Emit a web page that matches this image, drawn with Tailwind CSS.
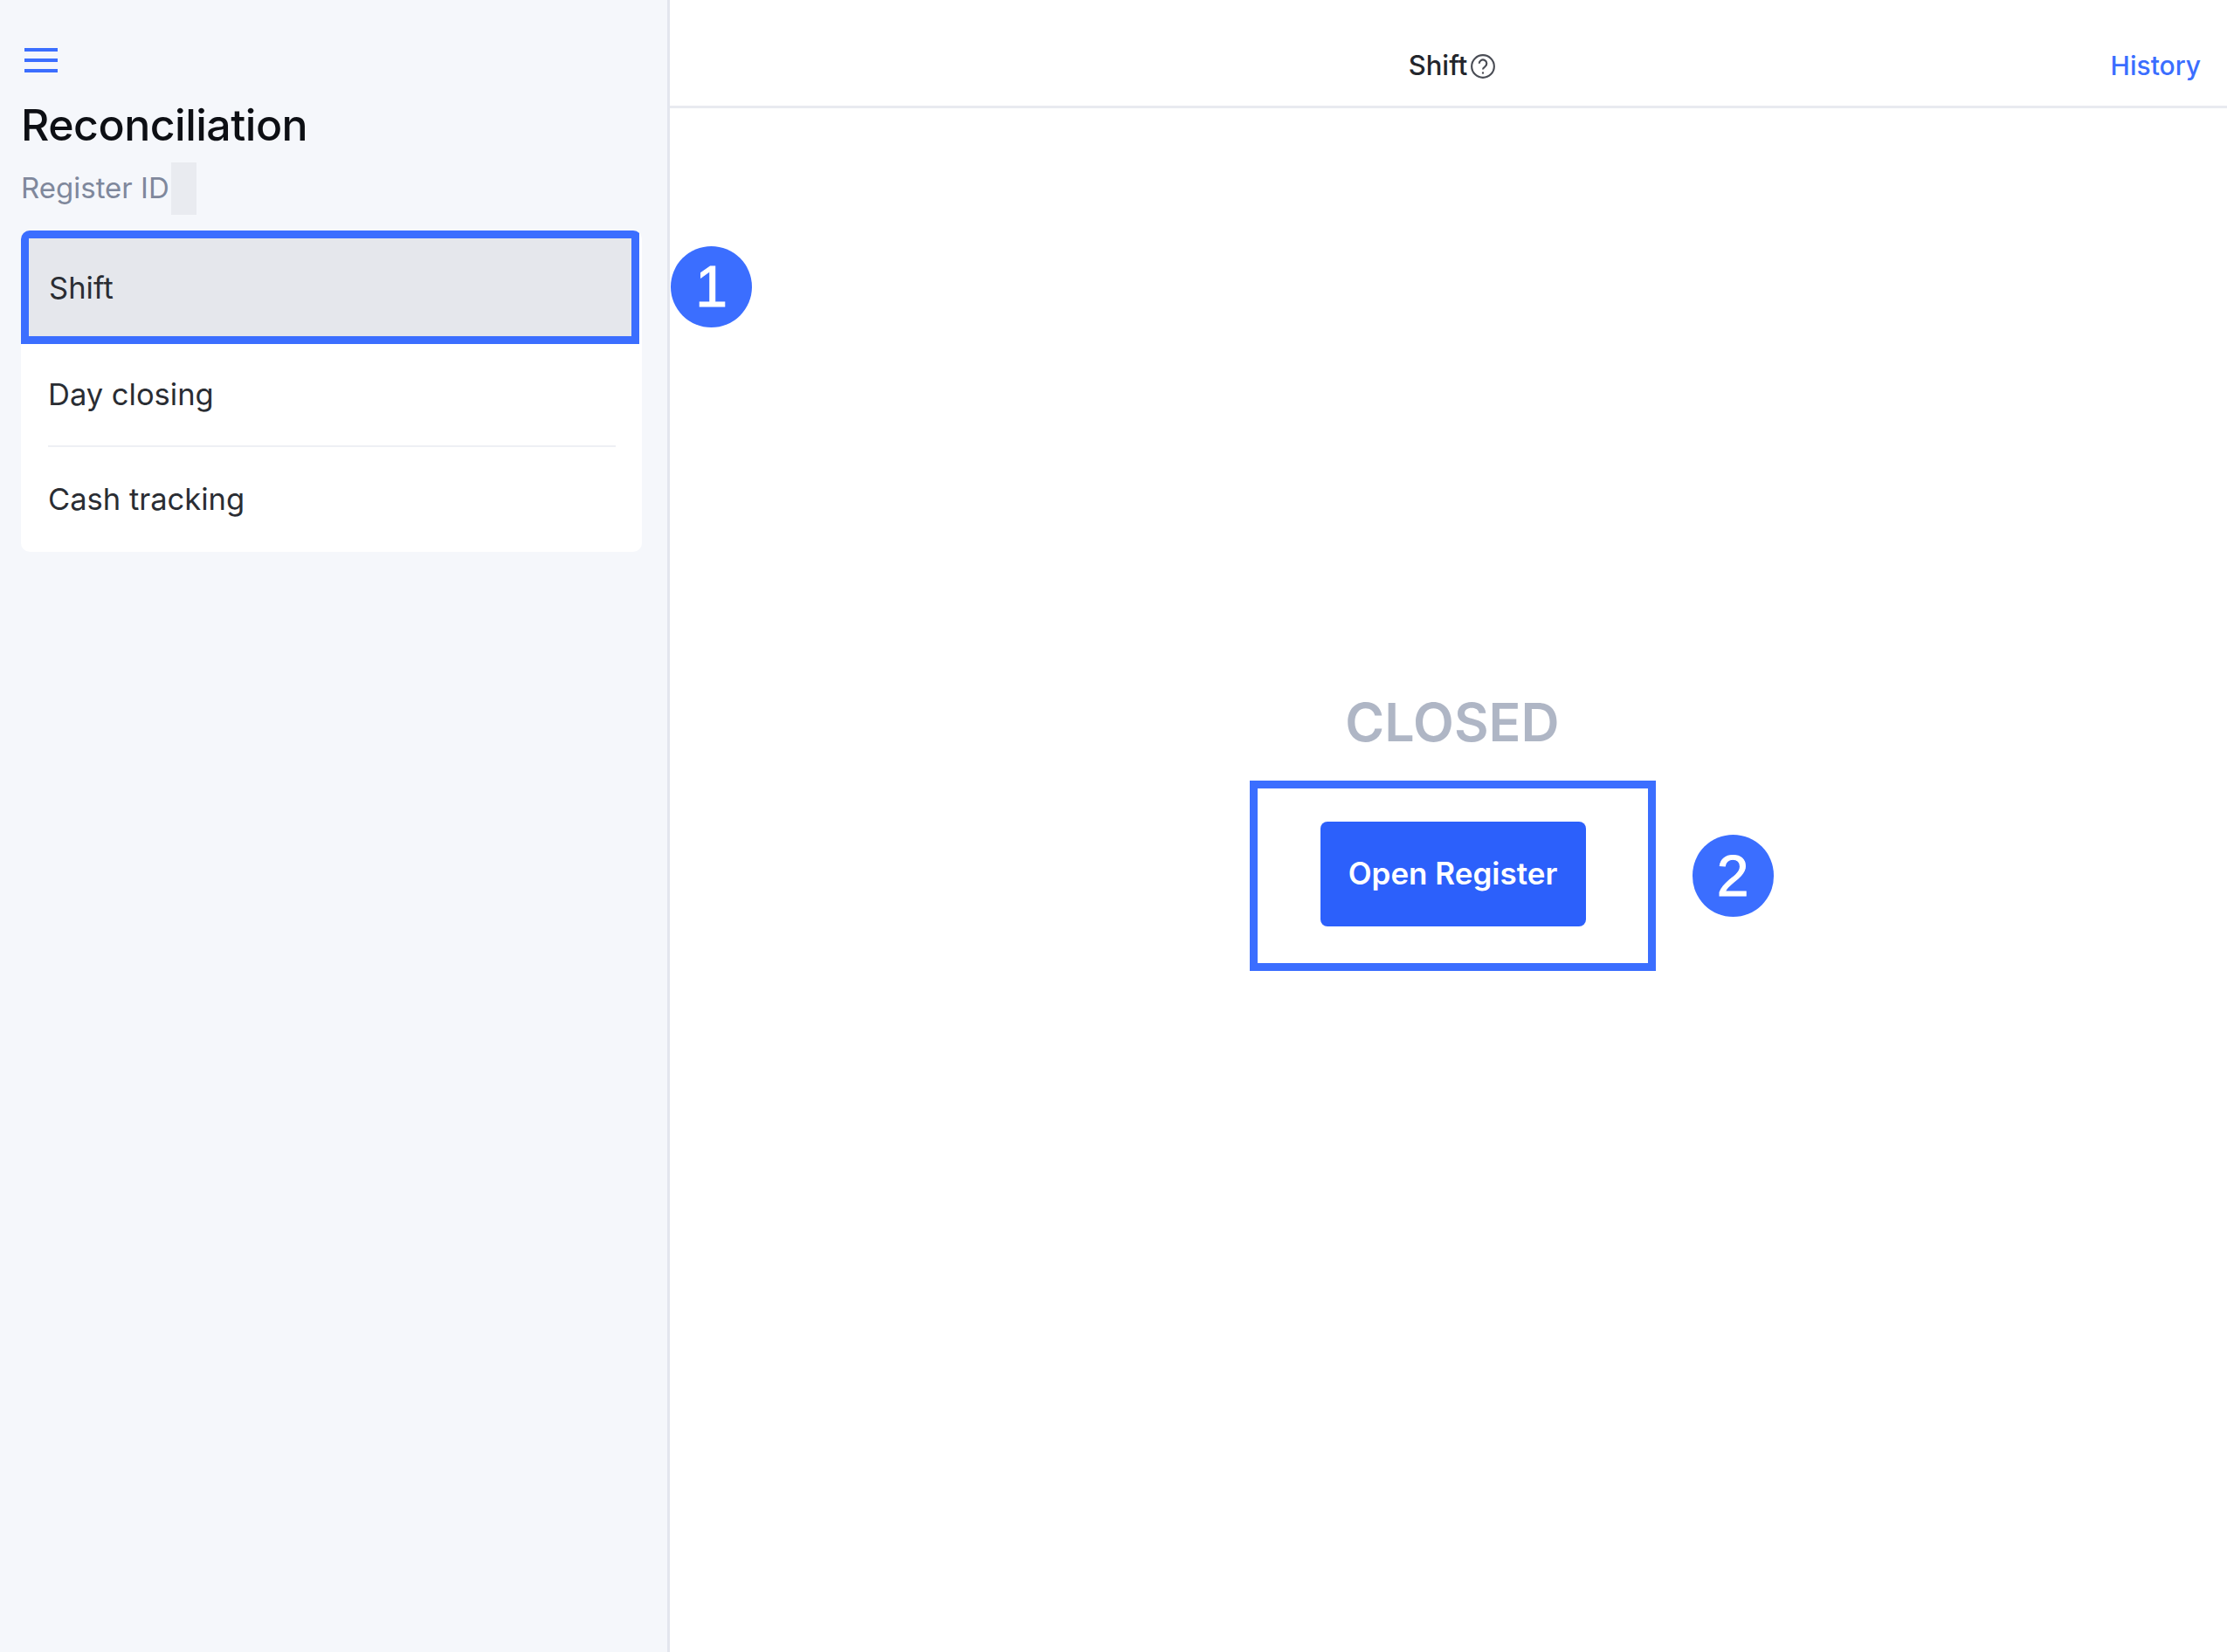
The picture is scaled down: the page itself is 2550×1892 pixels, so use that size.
<!DOCTYPE html>
<html lang="en">
  <head>
    <meta charset="UTF-8" />
    <title>Reconciliation</title>
    <script src="https://cdn.jsdelivr.net/npm/@tailwindcss/browser@4"></script>
  </head>
  <body class="font-['Inter',sans-serif] bg-white">
    <div class="flex w-[2550px] h-[1892px] overflow-hidden">
      <!-- sidebar -->
      <aside class="w-[767px] shrink-0 bg-[#f5f7fb] border-r-[3px] border-[#e3e6ee] pt-[54px] pl-[24px] pr-[30px]">
        <svg class="ml-[4px] mt-[1px] block" width="38" height="28" viewBox="0 0 38 28" fill="none" stroke="#3b6eff" stroke-width="4">
          <path d="M0 2H38M0 14H38M0 26H38" />
        </svg>
        <h1 class="mt-[28px] text-[50px] leading-[64px] font-medium text-[#0d0f14] tracking-[-0.5px]">Reconciliation</h1>
        <div class="mt-[11px] flex items-center h-[60px]">
          <span class="text-[33px] text-[#7f889c]">Register ID</span>
          <span class="ml-[2px] w-[29px] h-[60px] bg-[#e9ebf0]"></span>
        </div>
        <nav class="mt-[18px] w-[711px] bg-white rounded-[10px] overflow-hidden">
          <div class="h-[130px] w-[708px] flex items-center pl-[23px] pt-[2px] bg-[#e5e7ec] border-[9px] border-[#3b6eff] text-[34.5px] text-[#2a2d33]">Shift</div>
          <div class="ml-[31px] mr-[30px] h-[118px] flex items-center border-b-2 border-[#eef0f4] text-[34.5px] text-[#2a2d33]">Day closing</div>
          <div class="ml-[31px] mr-[30px] h-[120px] flex items-center text-[34.5px] text-[#2a2d33]">Cash tracking</div>
        </nav>
      </aside>

      <!-- main panel -->
      <main class="relative flex-1 flex flex-col">
        <header class="relative h-[124px] shrink-0 border-b-[3px] border-[#e8eaf0] flex items-center justify-center pl-[9px] pt-[30px]">
          <span class="text-[31px] font-medium text-[#23262c]">Shift</span>
          <svg class="ml-[3px]" width="30" height="30" viewBox="0 0 28 28" fill="none" stroke="#4a4d55" stroke-width="2">
            <circle cx="14" cy="14" r="12" />
            <path d="M10 11a4 4 0 1 1 6.2 3.3c-1.4 .9-2.2 1.6-2.2 3" />
            <path d="M14 20v2" />
          </svg>
          <a class="absolute right-[30px] text-[30px] font-medium text-[#3b6eff]">History</a>
        </header>

        <div class="flex flex-col items-center pl-[9px] pt-[667px]">
          <div class="text-[61px] leading-[72px] font-semibold text-[#afb6c5]">CLOSED</div>
          <div class="relative mt-[31px] w-[465px] h-[218px] border-[9px] border-[#3b6eff] flex items-center justify-center">
            <button class="w-[304px] h-[120px] rounded-[8px] bg-[#2c60fb] text-white text-[35px] leading-[48px] font-semibold -mt-[4px] ml-[1px] pb-[2px]">Open Register</button>
            <span class="absolute left-[498px] top-[53px] w-[93px] h-[94px] rounded-full bg-[#3b6eff] text-white flex items-center justify-center text-[66px] font-['Liberation_Sans',sans-serif] [-webkit-text-stroke:1px_white]">2</span>
          </div>
        </div>

        <span class="absolute left-[1px] top-[282px] w-[93px] h-[93px] rounded-full bg-[#3b6eff] text-white flex items-center justify-center text-[66px] font-['Liberation_Sans',sans-serif] [-webkit-text-stroke:1px_white]">1</span>
      </main>
    </div>
  </body>
</html>
